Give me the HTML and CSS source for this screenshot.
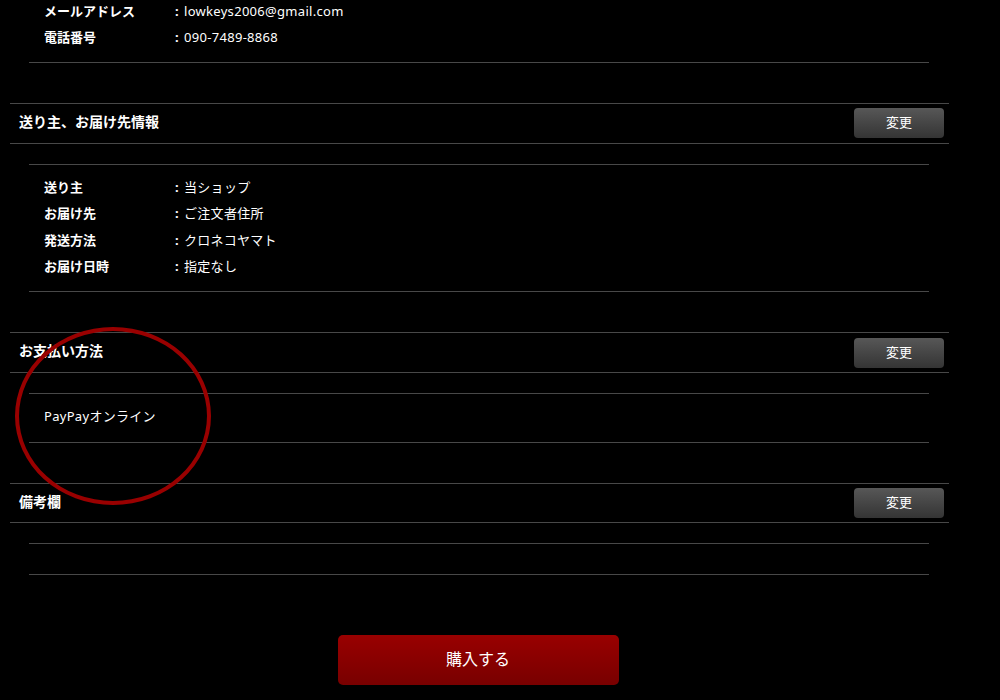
FILE: index.html
```html
<!DOCTYPE html>
<html lang="ja">
<head>
        <meta charset="UTF-8">
        <title>ご注文内容の確認</title>
        <link rel="stylesheet" href="styles.css">
</head>
<body>
        <div class="container">
                <div class="info first">
                        <div class="row"><span class="label">メールアドレス</span><span class="colon">:</span><span class="value">lowkeys2006@gmail.com</span></div>
                        <div class="row"><span class="label">電話番号</span><span class="colon">:</span><span class="value">090-7489-8868</span></div>
                </div>

                <div class="section-head">
                        <h2>送り主、お届け先情報</h2>
                        <button class="change">変更</button>
                </div>
                <div class="info">
                        <div class="row"><span class="label">送り主</span><span class="colon">:</span><span class="value">当ショップ</span></div>
                        <div class="row"><span class="label">お届け先</span><span class="colon">:</span><span class="value">ご注文者住所</span></div>
                        <div class="row"><span class="label">発送方法</span><span class="colon">:</span><span class="value">クロネコヤマト</span></div>
                        <div class="row"><span class="label">お届け日時</span><span class="colon">:</span><span class="value">指定なし</span></div>
                </div>

                <div class="section-head">
                        <h2>お支払い方法</h2>
                        <button class="change">変更</button>
                </div>
                <div class="info payment">
                        <div class="row"><span class="value">PayPayオンライン</span></div>
                </div>

                <div class="section-head short">
                        <h2>備考欄</h2>
                        <button class="change">変更</button>
                </div>
                <div class="info empty"></div>

                <div class="buy">
                        <button class="buy-button">購入する</button>
                </div>
        </div>

        <div class="mark"></div>
</body>
</html>
```

FILE: styles.css
```css
* {
        margin: 0;
        padding: 0;
        box-sizing: border-box;
}

body {
        background-color: #000;
        color: #fff;
        font-family: "Noto Sans", "Noto Sans CJK JP", sans-serif;
        font-size: 13px;
        width: 1000px;
        height: 700px;
        overflow: hidden;
        position: relative;
}

.container {
        width: 939px;
        margin: -13px 0 0 10px;
}

.info {
        margin: 20px 20px 40px 19px;
        padding: 9px 0 12px 15px;
        border-top: 1px solid #484848;
        border-bottom: 1px solid #484848;
}

.info.first {
        margin-top: 0;
        padding: 10px 0 11px 15px;
}

.info.payment {
        padding: 9px 0 13px 15px;
}

.info.payment .row {
        line-height: 26px;
}

.info.empty {
        height: 32px;
        padding: 0;
        margin-bottom: 0;
}

.row {
        display: flex;
        line-height: 26.4px;
        white-space: nowrap;
}

.label {
        width: 130px;
        font-weight: bold;
}

.colon {
        width: 10px;
        padding-left: 1px;
        font-weight: bold;
}

.value {
        letter-spacing: 0.3px;
}

.section-head {
        height: 41px;
        display: flex;
        align-items: center;
        justify-content: space-between;
        border-top: 1px solid #484848;
        border-bottom: 1px solid #484848;
        padding: 0 5px 0 9px;
}

.section-head.short {
        height: 40px;
}

.section-head h2 {
        font-size: 14px;
        font-weight: bold;
        margin-top: -5px;
}

.change {
        width: 90px;
        height: 30px;
        padding-bottom: 3px;
        border: none;
        border-radius: 4px;
        background: linear-gradient(#575757, #343434);
        color: #fff;
        font-family: "Noto Sans CJK JP", sans-serif;
        font-size: 13px;
}

.buy {
        display: flex;
        justify-content: center;
        margin-top: 60px;
}

.buy-button {
        width: 281px;
        height: 50px;
        padding-bottom: 4px;
        border: none;
        border-radius: 5px;
        background: linear-gradient(#990000, #780000);
        color: #fff;
        font-family: "Noto Sans CJK JP", sans-serif;
        font-size: 16px;
        margin-left: -3px;
}

.mark {
        position: absolute;
        left: 15px;
        top: 327px;
        width: 196px;
        height: 178px;
        border: 4px solid #990000;
        border-radius: 50%;
}
```
